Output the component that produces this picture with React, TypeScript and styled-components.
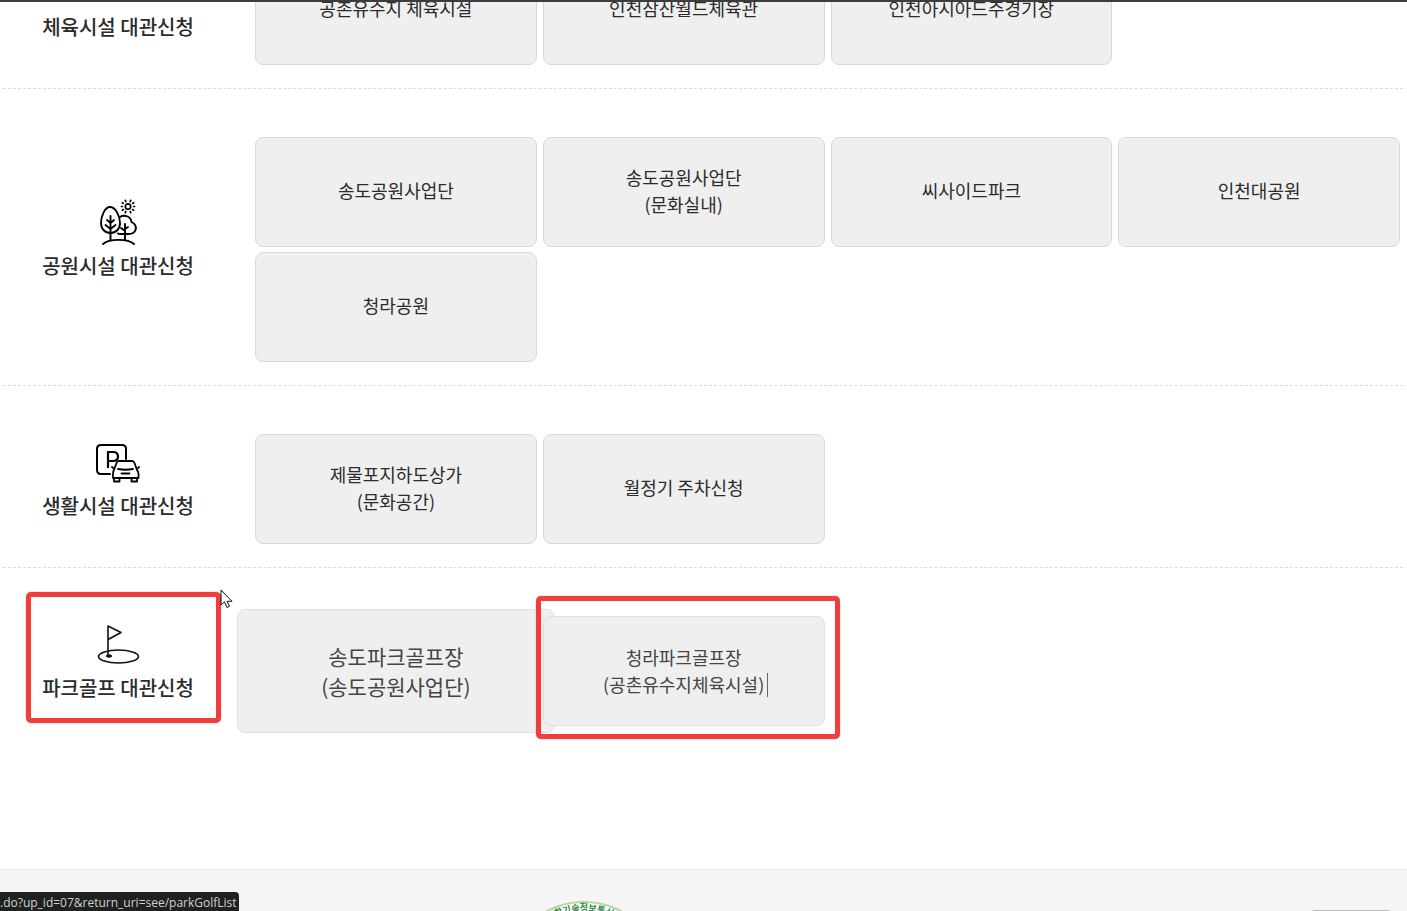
import React from 'react';
import styled, { createGlobalStyle } from 'styled-components';

enum EColor {
  TEXT = '#2b2b2b',
  TEXT_SOFT = '#444444',
  CARD = '#efefef',
  CARD_BORDER = '#d9d9d9',
  DASH = '#dcdcdc',
  RED = '#f23d3d',
  FOOTER = '#f5f5f5',
}

type TCardKind = 'normal' | 'large' | 'editing';

interface IFacility {
  lines: string[];
  kind?: TCardKind;
}

interface ICategory {
  title: string;
  icon?: React.ReactNode;
  marked?: boolean;
  items: IFacility[];
}

const TreeIcon = () => (
  <svg width="44" height="50" viewBox="0 0 44 50" fill="none" stroke="#000" strokeWidth="1.900" strokeLinecap="round">
    <path d="M14 9C9 9 5 18 5 25c0 6 4 10 9.500 10S24 31 24 25C24 18 19.500 9 14 9Z" />
    <path d="M14.500 18v24M14.500 25l-3.500-3M14.500 25l3.500-3M14.500 31l-5-4M14.500 31l5-4" />
    <path d="M24 19c5-3 11 0 11.500 5 4 2 5 5 4 8-1 3-4 4-7 4h-7.500c-1.500 0-2.500 0-3-.5" />
    <path d="M29 26v16M29 33l-4-3M29 31l3-2" />
    <path d="M7 46c6-5.500 25-5.500 31 0" />
    <circle cx="32" cy="8.500" r="2.700" strokeWidth="1.700" />
    <path strokeWidth="1.700" d="M25.500 8.500h.8M37.700 8.500h.8M29.300 2.300l.5 1.200M34.700 2.300l-.5 1.200M29.300 14.700l.5-1.200M34.700 14.700l-.5-1.200M26.400 4.800l1 .6M37.600 4.800l-1 .6M26.400 12.200l1-.6M37.600 12.200l-1-.6" />
  </svg>
);

const ParkingIcon = () => (
  <svg width="44" height="40" viewBox="0 0 44 40" fill="none" stroke="#000" strokeWidth="2" strokeLinecap="round" strokeLinejoin="round">
    <path d="M14 31H5c-2.500 0-4-1.500-4-4V6c0-2.500 1.500-4 4-4h21c2.500 0 4 1.500 4 4v10" />
    <path strokeWidth="2.200" strokeLinecap="butt" strokeLinejoin="miter" d="M12 25V9h5c3.500 0 5 1.800 5 4.500S20.500 18 17 18h-5" />
    <path strokeWidth="1.800" d="M18 27l2.500-7c.4-1.400 1.200-2 2.500-2h13c1.300 0 2.100.6 2.500 2l2.500 7c1 1 1.500 2 1.500 4v4H17v-4c0-2 0-3 1-4Z" />
    <path strokeWidth="1.800" d="M22 26c5 1 10 1 15 0M25.500 30.500h8M17 25l-1-1M42 25l1-1M18 35v3.500h5.500V35M35.500 35v3.500H41V35" />
  </svg>
);

const GolfIcon = () => (
  <svg width="44" height="40" viewBox="0 0 44 40" fill="none" stroke="#111" strokeWidth="1.600">
    <ellipse cx="22.500" cy="31.500" rx="20" ry="6.500" />
    <path d="M12 31V1l13 6.500-13 7" strokeLinejoin="round" />
    <ellipse cx="13" cy="31" rx="3" ry="1.700" fill="#111" stroke="none" />
  </svg>
);

const Seal = () => (
  <svg width="160" height="160" viewBox="0 0 160 160">
    <circle cx="80" cy="80" r="79" fill="#fff" stroke="#b5d69a" strokeWidth="2" />
    <path id="sealArc" d="M10 80a70 70 0 0 1 140 0" fill="none" />
    <text fill="#2f8a4c" fontSize="9" fontWeight="700" textAnchor="middle">
      <textPath href="#sealArc" startOffset="50%">
        과학기술정보통신부
      </textPath>
    </text>
  </svg>
);

const categories: ICategory[] = [
  {
    title: '체육시설 대관신청',
    items: [
      { lines: ['공촌유수지 체육시설'] },
      { lines: ['인천삼산월드체육관'] },
      { lines: ['인천아시아드주경기장'] },
    ],
  },
  {
    title: '공원시설 대관신청',
    icon: <TreeIcon />,
    items: [
      { lines: ['송도공원사업단'] },
      { lines: ['송도공원사업단', '(문화실내)'] },
      { lines: ['씨사이드파크'] },
      { lines: ['인천대공원'] },
      { lines: ['청라공원'] },
    ],
  },
  {
    title: '생활시설 대관신청',
    icon: <ParkingIcon />,
    items: [
      { lines: ['제물포지하도상가', '(문화공간)'] },
      { lines: ['월정기 주차신청'] },
    ],
  },
  {
    title: '파크골프 대관신청',
    icon: <GolfIcon />,
    marked: true,
    items: [
      { lines: ['송도파크골프장', '(송도공원사업단)'], kind: 'large' },
      { lines: ['청라파크골프장', '(공촌유수지체육시설)'], kind: 'editing' },
    ],
  },
];

const Category = ({ title, icon, marked, items }: ICategory) => (
  <StRow>
    <StLabel>
      <StIcon>{icon}</StIcon>
      <StTitle>{title}</StTitle>
      {marked && <StLabelMark />}
      {marked && (
        <StCursor width="13" height="20" viewBox="0 0 13 20">
          <path d="M1 1v15l3.500-3.200L7 18.500l2.500-1.200-2.400-5H12Z" fill="#fff" stroke="#111" />
        </StCursor>
      )}
    </StLabel>
    <StGrid>
      {items.map(({ lines, kind = 'normal' }) => (
        <StCard key={lines.join()} href="#" $kind={kind}>
          {lines.map((line) => (
            <span key={line}>{line}</span>
          ))}
          {kind === 'editing' && <StCaret />}
          {kind === 'editing' && <StCardMark />}
        </StCard>
      ))}
    </StGrid>
  </StRow>
);

const App = () => {
  const [first, ...rest] = categories;
  return (
    <StPage>
      <GlobalStyle />
      <StTopLine />
      <StList>
        <StScrolledRow>
          <Category {...first} />
        </StScrolledRow>
        {rest.map((category) => (
          <Category key={category.title} {...category} />
        ))}
      </StList>
      <StFooter>
        <Seal />
        <StFooterBox />
      </StFooter>
      <StStatus>.do?up_id=07&amp;return_uri=see/parkGolfList</StStatus>
    </StPage>
  );
};

export default App;

const GlobalStyle = createGlobalStyle`
  * {
    box-sizing: border-box;
  }
  body {
    margin: 0;
    background: white;
    color: ${EColor.TEXT};
    font-family: 'Noto Sans CJK KR', sans-serif;
  }
`;

const StPage = styled.div`
  min-height: 100vh;
  display: flex;
  flex-direction: column;
`;

const StTopLine = styled.div`
  height: 2px;
  background: #3c3c3c;
`;

const StList = styled.main`
  padding: 0 4px 0 3px;
  margin-bottom: 120px;
`;

const StRow = styled.section`
  flex: 1;
  display: flex;
  border-bottom: 1px dashed ${EColor.DASH};
  &:last-child {
    border-bottom: 0;
  }
`;

/* the first row is scrolled partly out of view */
const StScrolledRow = styled.div`
  height: 87px;
  display: flex;
  align-items: flex-end;
  overflow: hidden;
  ${StRow} {
    border-bottom: 1px dashed ${EColor.DASH};
  }
`;

const StLabel = styled.div`
  position: relative;
  width: 230px;
  margin-right: 22px;
  padding-bottom: 2px;
  flex-shrink: 0;
  display: flex;
  flex-direction: column;
  align-items: center;
  justify-content: center;
`;

const StIcon = styled.div`
  height: 60px;
  display: flex;
  align-items: center;
`;

const StTitle = styled.h2`
  margin: 0;
  font-size: 20px;
  line-height: 26px;
  font-weight: 500;
`;

const StGrid = styled.div`
  flex: 1;
  display: grid;
  grid-template-columns: repeat(4, 1fr);
  gap: 5px 6px;
  padding: 48px 3px 23px 0;
`;

const StCard = styled.a<{ $kind: TCardKind }>`
  position: relative;
  height: ${(props) => (props.$kind === 'large' ? '124px' : '110px')};
  margin: ${(props) => (props.$kind === 'large' ? '-7px -18px' : '0')};
  padding-bottom: ${(props) => (props.$kind === 'normal' ? '3px' : '0')};
  display: flex;
  flex-direction: column;
  align-items: center;
  justify-content: center;
  border: 1px solid
    ${(props) => (props.$kind === 'normal' ? EColor.CARD_BORDER : '#e0e0e0')};
  border-radius: 8px;
  background: ${EColor.CARD};
  color: ${(props) => (props.$kind === 'normal' ? EColor.TEXT : EColor.TEXT_SOFT)};
  font-size: ${(props) => (props.$kind === 'large' ? '21px' : '18px')};
  line-height: ${(props) => (props.$kind === 'large' ? '30px' : '27px')};
  text-decoration: none;
`;

const StMark = styled.div`
  position: absolute;
  border: 5px solid ${EColor.RED};
  border-radius: 5px;
  box-shadow: 0 0 1px #555;
  pointer-events: none;
`;

const StLabelMark = styled(StMark)`
  inset: 24px 12px 26px 23px;
`;

const StCardMark = styled(StMark)`
  inset: -21px -16px -14px -8px;
`;

const StCaret = styled.i`
  position: absolute;
  left: calc(50% + 83px);
  top: 56px;
  width: 1px;
  height: 24px;
  background: #666;
`;

const StCursor = styled.svg`
  position: absolute;
  left: 217px;
  top: 21px;
`;

const StFooter = styled.footer`
  flex: 1 0 42px;
  height: 42px;
  display: flex;
  align-items: flex-start;
  justify-content: space-between;
  padding: 31px 16px 0 504px;
  border-top: 1px solid #e8e8e8;
  background: ${EColor.FOOTER};
  overflow: hidden;
`;

const StFooterBox = styled.div`
  width: 80px;
  height: 30px;
  margin-top: 9px;
  border: 1px solid #bbb;
  border-radius: 3px;
  background: white;
`;

const StStatus = styled.div`
  position: fixed;
  left: 0;
  bottom: 0;
  height: 19px;
  padding-right: 2px;
  border-radius: 0 4px 0 0;
  background: #1f2120;
  color: #d0d0d0;
  font-family: 'Open Sans', 'Noto Sans', sans-serif;
  font-size: 12px;
  line-height: 21px;
`;
